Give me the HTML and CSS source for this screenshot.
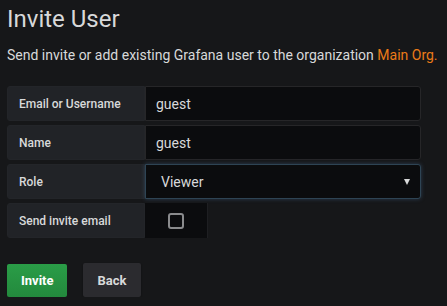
FILE: index.html
```html
<!DOCTYPE html>
<html lang="en">
<head>
    <meta charset="UTF-8">
    <title>Invite User</title>
    <link rel="stylesheet" href="styles.css">
</head>
<body>
    <h1 class="page-title">Invite User</h1>
    <p class="page-lead">Send invite or add existing Grafana user to the organization <span class="highlight-word">Main Org.</span></p>

    <form class="invite-form">
        <div class="gf-form">
            <span class="gf-form-label">Email or Username</span>
            <input class="gf-form-input" type="text" value="guest">
        </div>
        <div class="gf-form">
            <span class="gf-form-label">Name</span>
            <input class="gf-form-input" type="text" value="guest">
        </div>
        <div class="gf-form">
            <span class="gf-form-label">Role</span>
            <div class="gf-form-select focused">
                <span>Viewer</span>
                <span class="caret"></span>
            </div>
        </div>
        <div class="gf-form">
            <span class="gf-form-label">Send invite email</span>
            <div class="gf-form-switch">
                <span class="checkbox"></span>
            </div>
        </div>

        <div class="button-row">
            <button type="button" class="btn btn-success">Invite</button>
            <button type="button" class="btn btn-inverse">Back</button>
        </div>
    </form>
</body>
</html>
```

FILE: styles.css
```css
body {
    margin: 0;
    padding: 0 7px;
    background-color: #161719;
    color: #d8d9da;
    font-family: Roboto, "Liberation Sans", sans-serif;
}

.page-title {
    margin: 0;
    padding-top: 4px;
    font-size: 24px;
    font-weight: 400;
    line-height: 30px;
}

.page-lead {
    margin: 11px 0 0;
    font-size: 14px;
    line-height: 20px;
}

.highlight-word {
    color: #eb7b18;
}

.invite-form {
    margin-top: 21px;
}

.gf-form {
    display: flex;
    height: 35px;
    margin-bottom: 4px;
}

.gf-form-label {
    display: flex;
    align-items: center;
    box-sizing: border-box;
    width: 138px;
    padding-left: 11px;
    background: #212327;
    border: 1px solid #232529;
    border-radius: 3px 0 0 3px;
    font-size: 12px;
    font-weight: 500;
}

.gf-form-input,
.gf-form-select {
    box-sizing: border-box;
    width: 276px;
    height: 35px;
    padding: 0 10px;
    background: #0b0c0e;
    border: 1px solid #262628;
    border-radius: 0 3px 3px 0;
    color: #d8d9da;
    font-family: Roboto, "Liberation Sans", sans-serif;
    font-size: 14px;
    outline: none;
}

.gf-form-select {
    display: flex;
    align-items: center;
    justify-content: space-between;
    padding: 0 10px 0 15px;
}

.gf-form-select.focused {
    border-color: #2e4454;
    box-shadow: 0 0 4px rgba(70, 110, 150, 0.45);
}

.caret {
    width: 0;
    height: 0;
    border-left: 3.5px solid transparent;
    border-right: 3.5px solid transparent;
    border-top: 6px solid #d8d9da;
}

.gf-form-switch {
    display: flex;
    align-items: center;
    justify-content: center;
    width: 62px;
    background: #0b0c0e;
    border-right: 1px solid #1e1f22;
}

.checkbox {
    box-sizing: border-box;
    width: 16px;
    height: 16px;
    border: 2px solid #8a8b8d;
    border-radius: 3px;
}

.button-row {
    display: flex;
    align-items: flex-end;
    gap: 16px;
    margin-top: 25px;
}

.btn {
    height: 33px;
    padding: 0 14px;
    border: none;
    border-radius: 2px;
    font-family: Roboto, "Liberation Sans", sans-serif;
    font-size: 13px;
    font-weight: 700;
    cursor: pointer;
}

.btn-success {
    width: 60px;
    background: linear-gradient(#2a9d47, #23893d);
    color: #fff;
}

.btn-inverse {
    width: 58px;
    height: 34px;
    background: #2b2b2f;
    color: #d8d9da;
    box-shadow: 0 1px 2px rgba(0, 0, 0, 0.4);
}
```
